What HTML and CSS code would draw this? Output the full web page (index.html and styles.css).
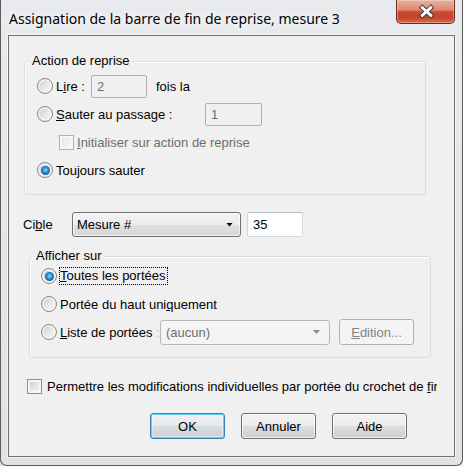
FILE: index.html
```html
<!DOCTYPE html>
<html lang="fr">
<head>
<meta charset="utf-8">
<title>Assignation de la barre de fin de reprise</title>
<link rel="stylesheet" href="styles.css">
</head>
<body>
<div class="window">
  <div class="titlebar">
    <div class="title">Assignation de la barre de fin de reprise, mesure 3</div>
    <div class="close">
      <svg width="17" height="15" viewBox="0 0 17 15">
        <path d="M4.2 3.6 L12.8 11.4 M12.8 3.6 L4.2 11.4" stroke="#3d3533" stroke-width="4.8" stroke-linecap="square" fill="none"/>
        <path d="M4.2 3.6 L12.8 11.4 M12.8 3.6 L4.2 11.4" stroke="#ffffff" stroke-width="2.8" stroke-linecap="square" fill="none"/>
      </svg>
    </div>
  </div>
  <div class="client">
    <div class="group group-action">
      <span class="legend legend-action">Action de reprise</span>
      <div class="row">
        <span class="radio"></span>
        <span class="label lbl-lire">L<u>i</u>re :</span>
        <span class="textbox disabled tb-lire">2</span>
        <span class="label fois">fois la</span>
      </div>
      <div class="row">
        <span class="radio"></span>
        <span class="label lbl-sauter"><u>S</u>auter au passage :</span>
        <span class="textbox disabled tb-sauter">1</span>
      </div>
      <div class="row">
        <span class="checkbox disabled cb-init"></span>
        <span class="label gray"><u>I</u>nitialiser sur action de reprise</span>
      </div>
      <div class="row">
        <span class="radio checked"></span>
        <span class="label">Tou<u>j</u>ours sauter</span>
      </div>
    </div>

    <div class="cible-row">
      <span class="lbl-cible">Ci<u>b</u>le</span>
      <div class="combo combo-mesure"><span>Mesure #</span><span class="arrow"></span></div>
      <span class="textbox tb-cible">35</span>
    </div>

    <div class="group group-afficher">
      <span class="legend legend-afficher">Afficher sur</span>
      <div class="row">
        <span class="radio checked"></span>
        <span class="label focus"><u>T</u>outes les portées</span>
      </div>
      <div class="row">
        <span class="radio"></span>
        <span class="label">Portée du haut uni<u>q</u>uement</span>
      </div>
      <div class="row">
        <span class="radio"></span>
        <span class="label lbl-liste"><u>L</u>iste de portées <span class="colon">:</span></span>
        <div class="combo combo-aucun"><span>(aucun)</span><span class="arrow"></span></div>
        <span class="btn disabled btn-edition"><u>E</u>dition...</span>
      </div>
    </div>

    <div class="check-row">
      <span class="checkbox"></span>
      <span class="label clip">Permettre les modifications individuelles par portée du crochet de <u>f</u>in</span>
    </div>

    <div class="buttons">
      <span class="btn default">OK</span>
      <span class="btn">Annuler</span>
      <span class="btn">Aide</span>
    </div>
  </div>
</div>
</body>
</html>
```

FILE: styles.css
```css
* { box-sizing: border-box; }
html, body { margin: 0; padding: 0; }
body {
  width: 463px;
  height: 466px;
  overflow: hidden;
  background: #dcdcdc;
  font: 13px "Liberation Sans", Arial, sans-serif;
  color: #000;
}

.window {
  width: 463px;
  height: 466px;
  border: 1px solid #5b5b5b;
  border-top: 0;
  border-radius: 0 0 7px 7px;
  background: linear-gradient(#e8eaed, #e0e2e5);
  padding: 0 7px 8px 7px;
  display: flex;
  flex-direction: column;
}

.titlebar {
  height: 35px;
  flex: none;
  display: flex;
  justify-content: space-between;
  align-items: flex-start;
}
.title {
  font: 14px/19px "Noto Sans", "Open Sans", sans-serif;
  padding: 9px 0 0 1px;
  color: #000;
  text-shadow: 0 0 6px #fff, 0 0 12px #fff, 0 0 16px #fff;
}
.close {
  width: 59px;
  height: 24px;
  border: 1px solid #6b2a1c;
  border-top: 0;
  border-radius: 0 0 5px 5px;
  background: linear-gradient(#eab0a0 0%, #df8a73 42%, #c94a30 52%, #c5442b 78%, #d96f52 100%);
  box-shadow: inset 0 0 0 1px rgba(255, 255, 255, 0.3);
  display: flex;
  align-items: center;
  justify-content: center;
  padding-left: 2px;
}
.close svg { display: block; }

.client {
  flex: 1;
  border: 1px solid #707070;
  background: #f0f0f0;
  box-shadow: 0 0 0 1px rgba(255, 255, 255, 0.6);
}

.group {
  position: relative;
  width: 402px;
  border: 1px solid #d5dfe5;
  border-radius: 3px;
  box-shadow: inset 1px 1px 0 #fff;
}
.group-action {
  margin: 25px 0 0 15px;
  height: 134px;
  padding: 10px 0 0 12px;
}
.group-afficher {
  margin: 19px 0 0 20px;
  height: 102px;
  padding: 5px 0 0 11px;
}
.legend {
  position: absolute;
  top: -8px;
  padding: 0 2px;
  line-height: 14px;
  background: #f0f0f0;
}
.legend-action { left: 5px; }
.legend-afficher { left: 4px; }

.row {
  height: 28px;
  display: flex;
  align-items: center;
}
.label {
  margin-left: 3px;
  white-space: nowrap;
}
.gray { color: #6d6d6d; }
.lbl-lire { width: 35px; flex: none; }
.fois { margin-left: 9px; }
.lbl-sauter { width: 149px; flex: none; }
.cb-init { margin-left: 22px; }

.radio {
  position: relative;
  flex: none;
  width: 16px;
  height: 16px;
  border-radius: 50%;
  border: 1px solid #8a8a8a;
  background: linear-gradient(135deg, #c9c9c9 0%, #e6e6e6 50%, #fbfbfb 100%);
  box-shadow: inset 0 0 0 1.5px #f3f3f3;
}
.radio.checked::after {
  content: "";
  position: absolute;
  left: 2.5px;
  top: 2.5px;
  width: 9px;
  height: 9px;
  border-radius: 50%;
  background: radial-gradient(circle at 50% 45%, #8fdcff 0%, #2f9ae0 35%, #135a9c 68%, #0a2f5a 100%);
}

.checkbox {
  flex: none;
  width: 15px;
  height: 15px;
  border: 1px solid #8e8f8f;
  background: linear-gradient(135deg, #c6c9ce 0%, #e4e5e7 55%, #f7f7f7 100%);
  box-shadow: inset 0 0 0 2px #f6f6f6;
}
.checkbox.disabled {
  border-color: #b1b1b1;
  background: linear-gradient(135deg, #e2e2e2 0%, #f0f0f0 60%, #f8f8f8 100%);
  box-shadow: inset 0 0 0 2px #f7f7f7;
}

.textbox {
  flex: none;
  height: 23px;
  display: flex;
  align-items: center;
  padding-left: 5px;
  border: 1px solid #abadb3;
  border-radius: 2px;
}
.textbox.disabled {
  border-color: #afafaf;
  background: #f0f0f0;
  color: #6d6d6d;
}
.tb-lire { width: 56px; }
.tb-sauter { width: 57px; }

.cible-row {
  display: flex;
  align-items: center;
  height: 25px;
  margin: 17px 0 0 14px;
}
.lbl-cible { width: 49px; flex: none; }
.tb-cible {
  width: 56px;
  height: 25px;
  margin-left: 6px;
  background: #fff;
  border-color: #d3d8de;
  border-top-color: #b9bdc4;
}

.combo {
  flex: none;
  height: 25px;
  display: flex;
  align-items: center;
  justify-content: space-between;
  border-radius: 3px;
  padding: 0 7px 0 4px;
}
.combo-mesure {
  width: 169px;
  border: 1px solid #707070;
  background: linear-gradient(#f3f3f3 0%, #ececec 50%, #e0e0e0 51%, #d6d6d6 100%);
  box-shadow: inset 0 0 0 1px rgba(255, 255, 255, 0.7);
}
.arrow {
  width: 7px;
  height: 4px;
  background: #000;
  clip-path: polygon(0 0, 100% 0, 50% 100%);
}
.combo-aucun {
  width: 170px;
  padding-left: 5px;
  padding-right: 9px;
  border: 1px solid #b5b9bc;
  background: #f4f4f4;
  color: #6d6d6d;
}
.combo-aucun .arrow { background: #8c8c8c; }

.focus {
  margin-left: 2px;
  line-height: 16px;
  border: 1px dotted #000;
  padding: 0 1px 0 0;
}
.lbl-liste { width: 100px; flex: none; }
.colon { color: #f0b45a; }

.btn {
  flex: none;
  width: 75px;
  height: 26px;
  display: flex;
  align-items: center;
  justify-content: center;
  border: 1px solid #707070;
  border-radius: 3px;
  background: linear-gradient(#f2f2f2 0%, #ebebeb 50%, #dddddd 51%, #cfcfcf 100%);
  box-shadow: inset 0 0 0 1px rgba(255, 255, 255, 0.75);
}
.btn.default {
  border-color: #3c7fb1;
  background: linear-gradient(#eef0f1 0%, #e6e8ea 50%, #d8dcdf 51%, #ccd2d6 100%);
  box-shadow: inset 0 0 0 1px #5ed3fa, inset 0 0 0 2px rgba(255, 255, 255, 0.35);
}
.btn.disabled {
  border-color: #adb2b5;
  background: #f4f4f4;
  box-shadow: none;
  color: #838383;
}
.btn-edition { margin-left: 9px; }

.check-row {
  display: flex;
  align-items: center;
  height: 20px;
  margin: 18px 0 0 18px;
}
.clip {
  margin-left: 5px;
  width: 390px;
  overflow: hidden;
}

.buttons {
  display: flex;
  gap: 16px;
  margin: 17px 0 0 141px;
}
```
